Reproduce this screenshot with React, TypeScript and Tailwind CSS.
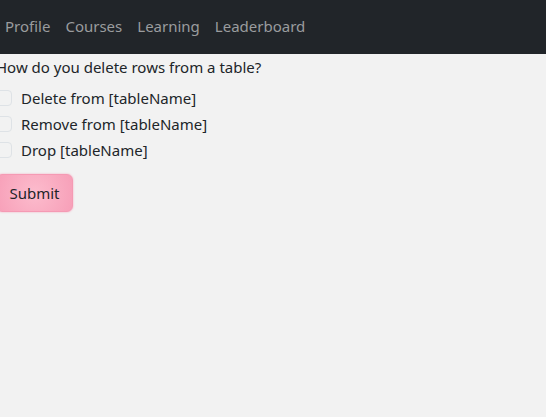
export default function App() {
  const options = ['Delete from [tableName]', 'Remove from [tableName]', 'Drop [tableName]']
  return (
    <div className="min-h-screen bg-[#f2f2f2] font-['Noto_Sans',sans-serif] text-[15px] text-[#212529]">
      <nav className="flex h-[54px] items-center gap-[15px] bg-[#212529] pb-[2px] pl-[5px] text-[#9a9c9e]">
        <a>Profile</a>
        <a>Courses</a>
        <a>Learning</a>
        <a>Leaderboard</a>
      </nav>
      <div className="-ml-[4px]">
        <p className="leading-[26px]">How do you delete rows from a table?</p>
        <div className="mt-[10px] flex flex-col gap-[10px]">
          {options.map((o) => (
            <label key={o} className="flex h-[16px] items-center gap-[9px]">
              <span className="h-[16px] w-[16px] rounded-[4px] border border-[#dee2e6] bg-[#f2f2f2]" />
              <span>{o}</span>
            </label>
          ))}
        </div>
        <button className="mt-[16px] h-[38px] w-[77px] rounded-[6px] border border-[#f59ab4] bg-[radial-gradient(circle,#fcbccd,#f79fb8)] text-[#212529] shadow-[0_0_2px_#f7a3bb]">
          Submit
        </button>
      </div>
    </div>
  )
}
